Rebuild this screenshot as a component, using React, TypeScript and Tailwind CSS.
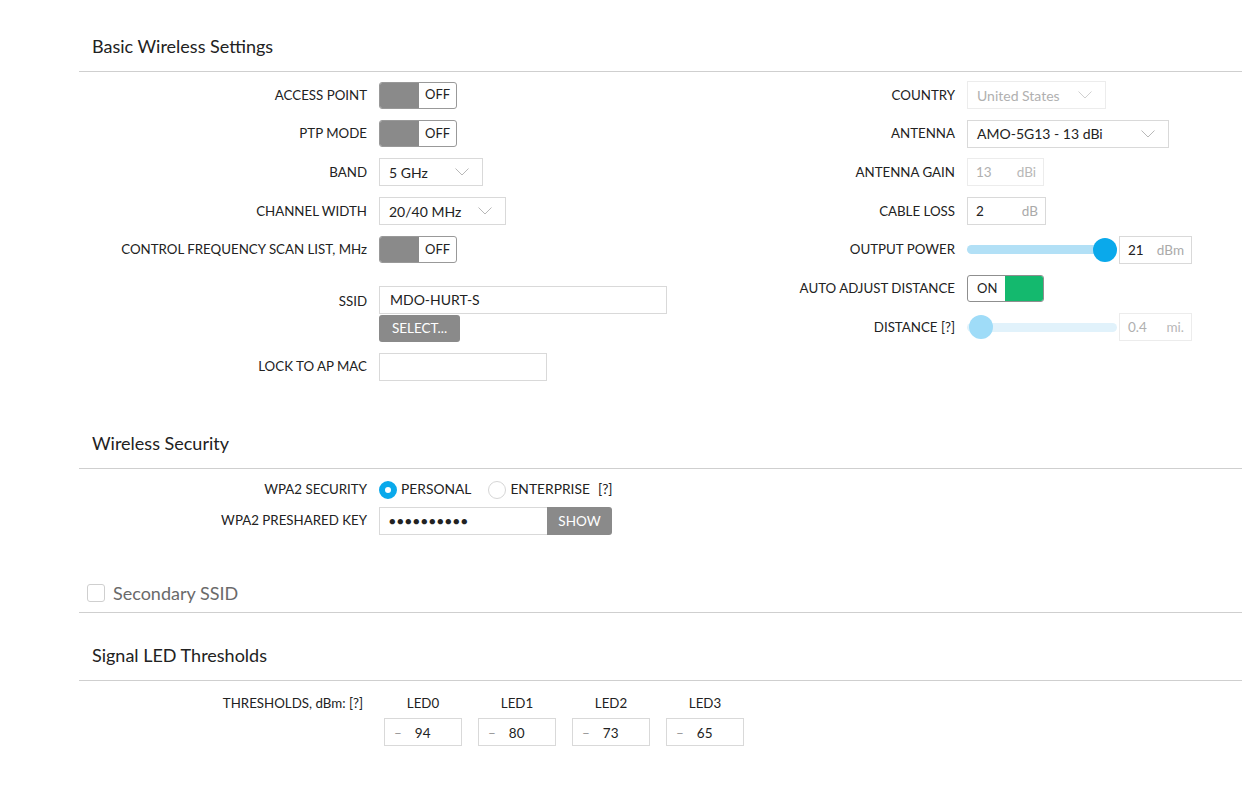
import React from "react";

// 小さなシェブロン（セレクト用）
const Chevron = ({ color = "#b8b8b8" }: { color?: string }) => (
  <svg width="14" height="8" viewBox="0 0 14 8" fill="none">
    <path d="M0.5 0.5L7 7L13.5 0.5" stroke={color} strokeWidth="1" />
  </svg>
);

function Toggle({ on }: { on: boolean }) {
  if (on) {
    return (
      <div className="flex h-[27px] w-[77px] overflow-hidden rounded-[3px] border border-[#8f8f8f]">
        <div className="flex w-[37px] items-center pl-[9px] text-[13px] text-[#222]">ON</div>
        <div className="flex-1 bg-[#14b96e]" />
      </div>
    );
  }
  return (
    <div className="flex h-[27px] w-[78px] overflow-hidden rounded-[3px] border border-[#999]">
      <div className="w-[39px] bg-[#8a8a8a]" />
      <div className="flex flex-1 items-center pl-[6px] text-[13px] text-[#222]">OFF</div>
    </div>
  );
}

function Select({
  value,
  width,
  disabled,
}: {
  value: string;
  width: string;
  disabled?: boolean;
}) {
  return (
    <div
      className={`flex h-[28px] items-center justify-between border pl-[9px] pr-[13px] text-[14px] ${width} ${
        disabled ? "border-[#ececec] text-[#b0b0b0]" : "border-[#d9d9d9] text-[#222]"
      }`}
    >
      <span>{value}</span>
      <Chevron color={disabled ? "#d0d0d0" : "#b8b8b8"} />
    </div>
  );
}

function UnitInput({
  value,
  unit,
  width,
  disabled,
}: {
  value: string;
  unit: string;
  width: string;
  disabled?: boolean;
}) {
  return (
    <div
      className={`flex h-[28px] items-center justify-between border pl-[8px] pr-[7px] text-[13.5px] ${width} ${
        disabled ? "border-[#ececec]" : "border-[#d9d9d9]"
      }`}
    >
      <span className={disabled ? "text-[#b0b0b0]" : "text-[#222]"}>{value}</span>
      <span className={disabled ? "text-[#b8b8b8]" : "text-[#aaa]"}>{unit}</span>
    </div>
  );
}

function Slider({ light }: { light?: boolean }) {
  return (
    <div className="relative flex h-[28px] w-[150px] items-center">
      <div className={`h-[9px] w-[150px] rounded-full ${light ? "bg-[#e1f2fb]" : "bg-[#b2e0f6]"}`} />
      <div
        className={`absolute top-[2px] h-[24px] w-[24px] rounded-full ${
          light ? "left-[2px] bg-[#9fdcf8]" : "left-[126px] bg-[#0aa9eb]"
        }`}
      />
    </div>
  );
}

function Row({
  label,
  labelW,
  children,
}: {
  label: string;
  labelW: string;
  children: React.ReactNode;
}) {
  return (
    <div className="flex h-[28px] items-center">
      <div className={`${labelW} shrink-0 pr-[12px] pt-[1px] text-right text-[13.3px] text-[#222]`}>{label}</div>
      {children}
    </div>
  );
}

function Heading({ title }: { title: string }) {
  return (
    <div className="border-b border-[#cfcfcf] pb-[13px] pl-[13px] text-[18px] leading-[24px] text-[#222]">
      {title}
    </div>
  );
}

export default function App() {
  const leds = [
    { name: "LED0", value: "94" },
    { name: "LED1", value: "80" },
    { name: "LED2", value: "73" },
    { name: "LED3", value: "65" },
  ];

  return (
    <div className="min-h-[800px] w-[1242px] bg-white pl-[79px] font-['Lato','Open_Sans',sans-serif] text-[#222]">
      {/* Basic Wireless Settings */}
      <div className="pt-[34px]">
        <Heading title="Basic Wireless Settings" />
      </div>

      <div className="flex pt-[9px]">
        {/* 左カラム */}
        <div className="flex w-[621px] flex-col">
          <div className="flex flex-col gap-[10.7px]">
            <Row label="ACCESS POINT" labelW="w-[300px]">
              <Toggle on={false} />
            </Row>
            <Row label="PTP MODE" labelW="w-[300px]">
              <Toggle on={false} />
            </Row>
            <Row label="BAND" labelW="w-[300px]">
              <Select value="5 GHz" width="w-[104px]" />
            </Row>
            <Row label="CHANNEL WIDTH" labelW="w-[300px]">
              <Select value="20/40 MHz" width="w-[127px]" />
            </Row>
            <Row label="CONTROL FREQUENCY SCAN LIST, MHz" labelW="w-[300px]">
              <Toggle on={false} />
            </Row>
          </div>

          <div className="mt-[22px] flex">
            <div className="h-[28px] w-[300px] shrink-0 pr-[12px] pt-[1px] text-right text-[13.3px] leading-[28px]">
              SSID
            </div>
            <div className="flex flex-col">
              <div className="flex h-[28px] w-[288px] items-center border border-[#d9d9d9] pl-[10px] text-[14px]">
                MDO-HURT-S
              </div>
              <div className="mt-[1px] flex h-[27px] w-[81px] items-center justify-center rounded-[3px] bg-[#8a8a8a] text-[13.5px] text-white">
                SELECT...
              </div>
            </div>
          </div>

          <div className="mt-[11px]">
            <Row label="LOCK TO AP MAC" labelW="w-[300px]">
              <div className="h-[28px] w-[168px] border border-[#d9d9d9]" />
            </Row>
          </div>
        </div>

        {/* 右カラム */}
        <div className="flex flex-col gap-[10.7px]">
          <Row label="COUNTRY" labelW="w-[267px]">
            <Select value="United States" width="w-[139px]" disabled />
          </Row>
          <Row label="ANTENNA" labelW="w-[267px]">
            <Select value="AMO-5G13 - 13 dBi" width="w-[202px]" />
          </Row>
          <Row label="ANTENNA GAIN" labelW="w-[267px]">
            <UnitInput value="13" unit="dBi" width="w-[77px]" disabled />
          </Row>
          <Row label="CABLE LOSS" labelW="w-[267px]">
            <UnitInput value="2" unit="dB" width="w-[79px]" />
          </Row>
          <Row label="OUTPUT POWER" labelW="w-[267px]">
            <Slider />
            <div className="ml-[2px]">
              <UnitInput value="21" unit="dBm" width="w-[73px]" />
            </div>
          </Row>
          <Row label="AUTO ADJUST DISTANCE" labelW="w-[267px]">
            <Toggle on />
          </Row>
          <Row label="DISTANCE [?]" labelW="w-[267px]">
            <Slider light />
            <div className="ml-[2px]">
              <UnitInput value="0.4" unit="mi." width="w-[73px]" disabled />
            </div>
          </Row>
        </div>
      </div>

      {/* Wireless Security */}
      <div className="mt-[50px]">
        <Heading title="Wireless Security" />
      </div>
      <div className="flex flex-col gap-[3px] pt-[7px]">
        <Row label="WPA2 SECURITY" labelW="w-[300px]">
          <div className="flex items-center text-[13.8px]">
            <span className="h-[18px] w-[18px] rounded-full border-[6px] border-[#0aa9eb] bg-white" />
            <span className="ml-[4px]">PERSONAL</span>
            <span className="ml-[17px] h-[18px] w-[18px] rounded-full border border-[#d6d6d6] bg-white" />
            <span className="ml-[4px]">ENTERPRISE</span>
            <span className="ml-[8px]">[?]</span>
          </div>
        </Row>
        <Row label="WPA2 PRESHARED KEY" labelW="w-[300px]">
          <div className="flex">
            <div className="flex h-[28px] w-[168px] items-center border border-r-0 border-[#d9d9d9] pl-[9px] text-[11px] tracking-[1.4px]">
              ●●●●●●●●●●
            </div>
            <div className="flex h-[28px] w-[65px] items-center justify-center rounded-r-[3px] bg-[#8a8a8a] text-[13.5px] text-white">
              SHOW
            </div>
          </div>
        </Row>
      </div>

      {/* Secondary SSID */}
      <div className="mt-[46px] flex items-center border-b border-[#cfcfcf] pb-[7px] pl-[8px]">
        <span className="h-[18px] w-[18px] rounded-[3px] border border-[#cfcfcf]" />
        <span className="ml-[8px] text-[18px] leading-[24px] text-[#6a6a6a]">Secondary SSID</span>
      </div>

      {/* Signal LED Thresholds */}
      <div className="mt-[30px]">
        <Heading title="Signal LED Thresholds" />
      </div>
      <div className="flex pt-[14px]">
        <div className="w-[296px] shrink-0 pr-[12px] text-right text-[13.3px] leading-[16px]">THRESHOLDS, dBm: [?]</div>
        <div className="ml-[9px] flex gap-[16px]">
          {leds.map((led) => (
            <div key={led.name} className="flex w-[78px] flex-col items-center">
              <div className="text-[13.3px] leading-[16px]">{led.name}</div>
              <div className="mt-[7px] flex h-[28px] w-[78px] items-center border border-[#d9d9d9] pl-[9px] pt-[2px] text-[13.5px]">
                <span className="text-[#999]">–</span>
                <span className="ml-[13px]">{led.value}</span>
              </div>
            </div>
          ))}
        </div>
      </div>
    </div>
  );
}
